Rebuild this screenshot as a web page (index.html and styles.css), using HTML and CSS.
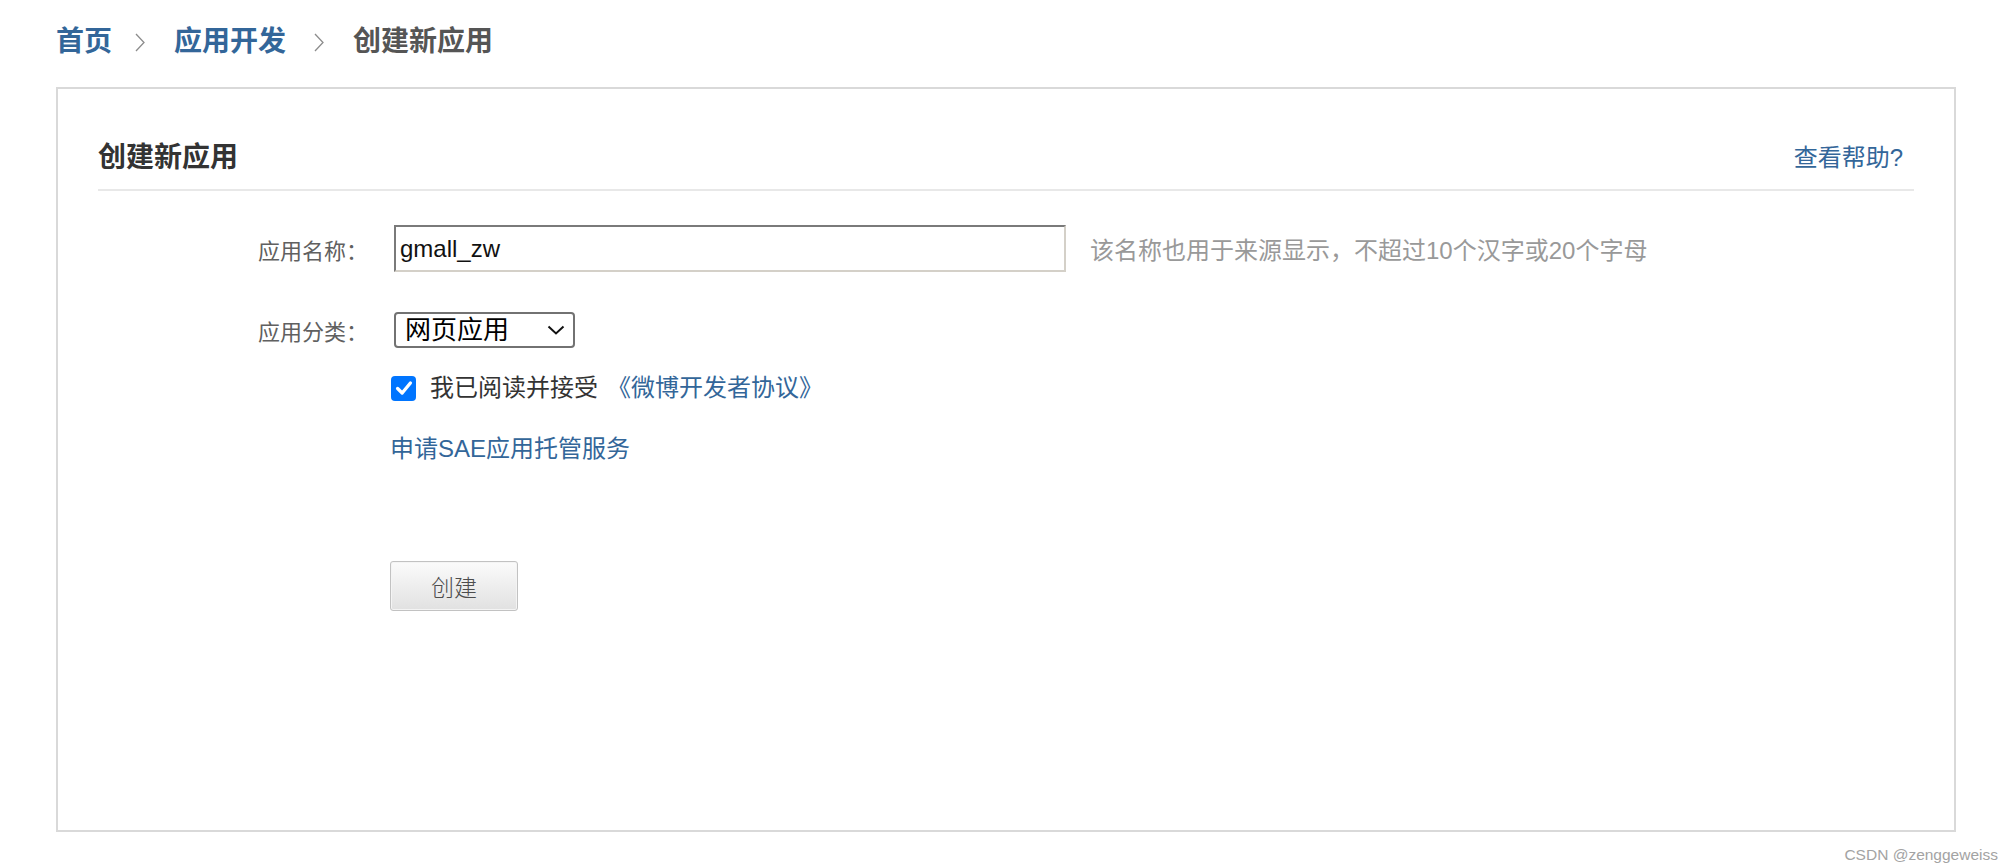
FILE: index.html
```html
<!DOCTYPE html>
<html lang="zh-CN">
<head>
<meta charset="utf-8">
<title>创建新应用</title>
<link rel="stylesheet" href="styles.css">
</head>
<body>
<div class="page">
  <nav class="crumbs">
    <a class="crumb-link" href="#">首页</a>
    <svg class="crumb-sep" viewBox="0 0 10 19" aria-hidden="true"><polyline points="1,1 9,9.5 1,18" fill="none" stroke="#8c8c8c" stroke-width="1.3"/></svg>
    <a class="crumb-link" href="#">应用开发</a>
    <svg class="crumb-sep crumb-sep-last" viewBox="0 0 10 19" aria-hidden="true"><polyline points="1,1 9,9.5 1,18" fill="none" stroke="#8c8c8c" stroke-width="1.3"/></svg>
    <span class="crumb-current">创建新应用</span>
  </nav>

  <section class="panel">
    <header class="panel-head">
      <h1 class="panel-title">创建新应用</h1>
      <a class="help-link" href="#">查看帮助?</a>
    </header>

    <form class="form">
      <div class="field field-name">
        <label class="field-label">应用名称：</label>
        <input class="text-input" type="text" value="gmall_zw">
        <span class="hint">该名称也用于来源显示，不超过10个汉字或20个字母</span>
      </div>

      <div class="field field-type">
        <label class="field-label">应用分类：</label>
        <div class="select">
          <span class="select-value">网页应用</span>
          <svg class="select-arrow" viewBox="0 0 18 10" aria-hidden="true"><polyline points="1.5,1.5 9,8.5 16.5,1.5" fill="none" stroke="#111" stroke-width="2"/></svg>
        </div>
      </div>

      <div class="agree">
        <span class="checkbox"><svg viewBox="0 0 24 24" aria-hidden="true"><polyline points="5,12.5 10,17.5 19,6.5" fill="none" stroke="#fff" stroke-width="3.6" stroke-linecap="round" stroke-linejoin="round"/></svg></span>
        <span class="agree-text">我已阅读并接受<a class="link agree-link" href="#">《微博开发者协议》</a></span>
      </div>

      <div class="sae"><a class="link" href="#">申请SAE应用托管服务</a></div>

      <div class="actions"><button class="btn" type="button">创建</button></div>
    </form>
  </section>

  <div class="watermark">CSDN @zenggeweiss</div>
</div>
</body>
</html>
```

FILE: styles.css
```css
* {
  box-sizing: border-box;
}

html, body {
  margin: 0;
  padding: 0;
  background: #ffffff;
}

body {
  font-family: "Liberation Sans", "Noto Sans CJK SC", sans-serif;
  color: #333333;
}

a {
  text-decoration: none;
}

.page {
  position: relative;
  height: 865px;
  padding: 22px 59px 0 56px;
}

/* breadcrumb */
.crumbs {
  display: flex;
  align-items: center;
  height: 40px;
  font-size: 28px;
  line-height: 40px;
  font-weight: 700;
}

.crumb-link {
  color: #336699;
}

.crumb-current {
  color: #555555;
}

.crumb-sep {
  width: 10px;
  height: 19px;
  margin: 0 29px 0 23px;
  flex-shrink: 0;
}

.crumb-sep-last {
  margin: 0 29px 0 28px;
}

/* panel */
.panel {
  margin-top: 25px;
  border: 2px solid #d9d9d9;
  padding: 49px 40px 219px 40px;
}

.panel-head {
  display: flex;
  align-items: center;
  justify-content: space-between;
  padding: 0 11px 11px 0;
  border-bottom: 2px solid #e8e8e8;
}

.panel-title {
  margin: 0;
  font-size: 28px;
  line-height: 40px;
  font-weight: 700;
  color: #333333;
}

.help-link {
  font-size: 24px;
  line-height: 40px;
  color: #336699;
}

/* form */
.form {
  margin: 0;
  padding-top: 34px;
}

.field {
  display: flex;
  align-items: center;
}

.field-type {
  margin-top: 40px;
}

.field-label {
  flex-shrink: 0;
  width: 136px;
  margin-left: 160px;
  font-size: 22px;
  color: #606060;
}

.text-input {
  width: 672px;
  height: 47px;
  margin: 0;
  padding: 0 4px;
  border: 2px solid;
  border-color: #7a7a7a #d4d0c8 #d4d0c8 #7a7a7a;
  border-radius: 0;
  font-family: "Liberation Sans", sans-serif;
  font-size: 24px;
  color: #111111;
  background: #ffffff;
  outline: none;
}

.hint {
  margin-left: 24px;
  font-size: 24px;
  color: #999999;
  white-space: nowrap;
}

.select {
  display: flex;
  align-items: center;
  justify-content: space-between;
  width: 181px;
  height: 36px;
  padding: 0 8px 0 9px;
  border: 2px solid #727272;
  border-radius: 4px;
  background: #ffffff;
}

.select-value {
  font-size: 26px;
  line-height: 32px;
  color: #000000;
}

.select-arrow {
  width: 18px;
  height: 10px;
}

.agree {
  display: flex;
  align-items: center;
  height: 26px;
  margin-top: 27px;
  margin-left: 293px;
  font-size: 24px;
  line-height: 26px;
  color: #333333;
}

.checkbox {
  display: flex;
  align-items: center;
  justify-content: center;
  width: 25px;
  height: 25px;
  margin-right: 14px;
  border-radius: 4px;
  background: #0075ff;
  flex-shrink: 0;
}

.checkbox svg {
  width: 22px;
  height: 22px;
}

.link {
  color: #336699;
}

.agree-link {
  margin-left: 9px;
}

.sae {
  margin-top: 33px;
  margin-left: 292px;
  font-size: 24px;
  line-height: 30px;
}

.actions {
  margin-top: 97px;
  margin-left: 292px;
}

.btn {
  display: block;
  width: 128px;
  height: 50px;
  margin: 0;
  padding: 0;
  border: 1px solid #c2c2c2;
  border-radius: 3px;
  background: linear-gradient(#fbfbfb, #e1e1e1);
  box-shadow: inset 0 0 0 1px #f4f4f4;
  font-family: "Noto Sans CJK SC", sans-serif;
  font-size: 23px;
  font-weight: 300;
  color: #4d4d4d;
}

.watermark {
  position: absolute;
  right: 17px;
  top: 846px;
  font-family: "Liberation Sans", sans-serif;
  font-size: 15.5px;
  color: #a3a3a3;
}
```
